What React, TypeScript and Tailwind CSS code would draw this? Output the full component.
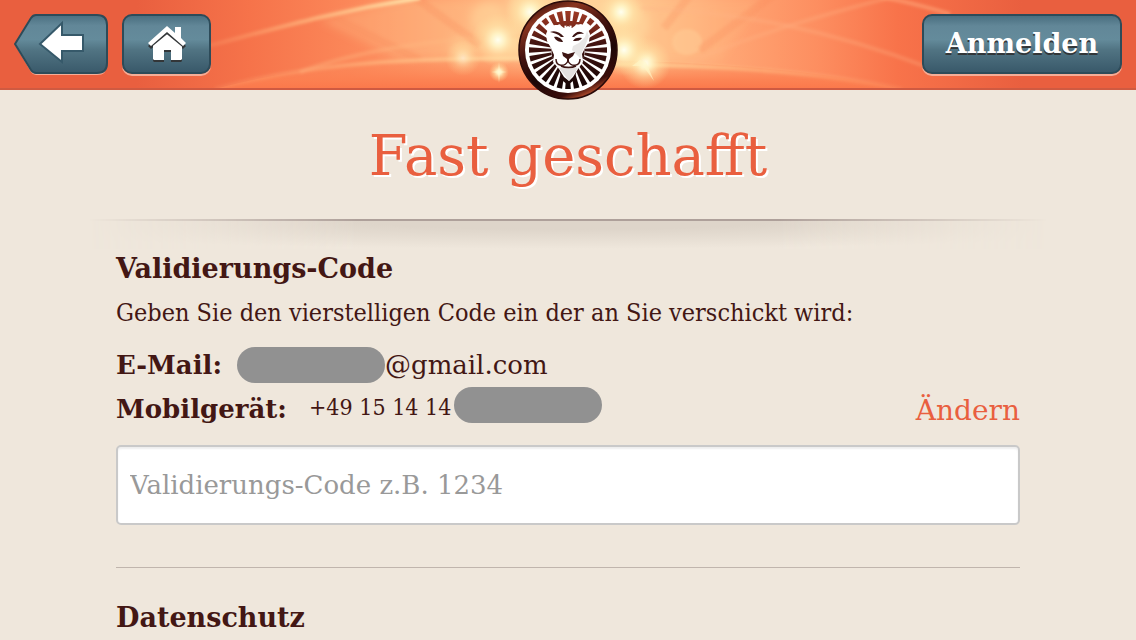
import React, { useState } from 'react';

// 28 mane rays around the lion's head
const RAYS = Array.from({ length: 28 }, (_, i) => (i * 360) / 28);

const Flare: React.FC<{ x: number; y: number; r: number }> = ({ x, y, r }) => (
  <circle cx={x} cy={y} r={r} fill="url(#flare)" />
);

const HeaderGlow: React.FC = () => (
  <svg
    className="absolute inset-0 w-full h-full"
    viewBox="0 0 1136 88"
    preserveAspectRatio="xMidYMid slice"
    aria-hidden="true"
  >
    <defs>
      <linearGradient id="base" x1="0" x2="1" y1="0" y2="0">
        <stop offset="0.12" stopColor="#e95f3f" />
        <stop offset="0.22" stopColor="#f6734a" />
        <stop offset="0.32" stopColor="#fc8a5b" />
        <stop offset="0.42" stopColor="#ffab76" />
        <stop offset="0.48" stopColor="#ffc892" />
        <stop offset="0.56" stopColor="#ffc38c" />
        <stop offset="0.64" stopColor="#ffa674" />
        <stop offset="0.72" stopColor="#fd8e60" />
        <stop offset="0.79" stopColor="#f8734a" />
        <stop offset="0.9" stopColor="#e95f3f" />
      </linearGradient>
      <linearGradient id="streak" x1="0" x2="1" y1="0" y2="0">
        <stop offset="0" stopColor="#ff9c6a" stopOpacity="0.2" />
        <stop offset="0.5" stopColor="#ffb67e" stopOpacity="0.8" />
        <stop offset="1" stopColor="#ffe6ab" />
      </linearGradient>
      <linearGradient id="streakBack" x1="1" x2="0" y1="0" y2="0">
        <stop offset="0" stopColor="#ff9c6a" stopOpacity="0.2" />
        <stop offset="0.5" stopColor="#ffb67e" stopOpacity="0.8" />
        <stop offset="1" stopColor="#ffe6ab" />
      </linearGradient>
      <linearGradient id="ground" x1="0" x2="0" y1="0" y2="1">
        <stop offset="0" stopColor="#fc8a5a" stopOpacity="0.2" />
        <stop offset="0.7" stopColor="#fc8051" stopOpacity="0.9" />
        <stop offset="1" stopColor="#fb784b" />
      </linearGradient>
      <radialGradient id="flare">
        <stop offset="0" stopColor="#fffff0" />
        <stop offset="0.25" stopColor="#fff6c8" stopOpacity="0.9" />
        <stop offset="0.55" stopColor="#ffe8ac" stopOpacity="0.5" />
        <stop offset="1" stopColor="#ffdc9b" stopOpacity="0" />
      </radialGradient>
      <filter id="soft" x="-10%" y="-50%" width="120%" height="200%">
        <feGaussianBlur stdDeviation="1.5" />
      </filter>
      <filter id="softer" x="-20%" y="-50%" width="140%" height="200%">
        <feGaussianBlur stdDeviation="5" />
      </filter>
    </defs>
    <rect width="1136" height="88" fill="url(#base)" />
    <g filter="url(#softer)" fill="#ffdba0">
      <path d="M320 20L400 0H520V55L400 58Z" opacity="0.25" />
      <path d="M640 0H760L720 60H640Z" opacity="0.12" />
      <circle cx="488" cy="20" r="18" opacity="0.5" />
      <circle cx="462" cy="48" r="12" opacity="0.4" />
      <circle cx="627" cy="24" r="22" opacity="0.6" />
      <rect x="510" y="-5" width="120" height="64" opacity="0.6" />
    </g>
    <ellipse cx="687" cy="42" rx="15" ry="13" fill="#ffd09a" opacity="0.45" filter="url(#soft)" />
    <g filter="url(#soft)" stroke="#f88455" strokeWidth="8" opacity="0.22" fill="none">
      <path d="M412 -5L480 45M330 15L420 60M690 -5L664 28M780 -10L700 50" />
    </g>
    <path d="M215 89C320 60 450 57 568 59C700 62 810 68 902 89Z" fill="url(#ground)" />
    <g filter="url(#soft)" fill="none" strokeWidth="4">
      <path d="M200 48C270 30 330 12 420 -2" stroke="url(#streak)" />
      <path d="M215 89C320 60 430 57 568 59" stroke="url(#streak)" />
      <path d="M568 64C700 64 810 70 902 89" stroke="url(#streakBack)" />
      <path d="M640 8C740 12 830 30 930 68" stroke="#ffb483" opacity="0.3" />
      <path d="M880 -3C905 1 930 8 950 14" stroke="#ffa477" opacity="0.6" />
      <path d="M900 -5C800 20 740 40 690 62" stroke="#ffb483" opacity="0.3" />
      <path d="M300 72C360 50 440 38 520 36" stroke="#ffb985" opacity="0.35" />
    </g>
    <Flare x={498} y={40} r={27} />
    <g opacity="0.55">
      <Flare x={463} y={58} r={18} />
    </g>
    <Flare x={499} y={72} r={10} />
    <Flare x={530} y={12} r={25} />
    <Flare x={621} y={12} r={24} />
    <Flare x={645} y={63} r={26} />
    <Flare x={624} y={50} r={26} />
    <path
      d="M499 62L500 71L507 72L500 73L499 83L498 73L491 72L498 71ZM640 60L646 62L654 81L643 66L632 66Z"
      fill="#fff6c8"
      opacity="0.6"
    />
  </svg>
);

const LionLogo: React.FC = () => (
  <svg className="block w-[100px] h-[100px]" viewBox="0 0 100 100" role="img" aria-label="Logo">
    <defs>
      <linearGradient id="ring" x1="0.25" x2="0.7" y1="0" y2="1">
        <stop offset="0" stopColor="#3a0f0c" />
        <stop offset="0.15" stopColor="#8a3520" />
        <stop offset="0.4" stopColor="#451310" />
        <stop offset="0.65" stopColor="#1c0606" />
        <stop offset="0.88" stopColor="#3a0d0b" />
        <stop offset="0.97" stopColor="#b8502e" />
      </linearGradient>
      <linearGradient id="mane" gradientUnits="userSpaceOnUse" x1="0" x2="0" y1="10" y2="90">
        <stop offset="0" stopColor="#a03a25" />
        <stop offset="0.22" stopColor="#7c2a1b" />
        <stop offset="0.4" stopColor="#451512" />
        <stop offset="1" stopColor="#120404" />
      </linearGradient>
    </defs>
    <circle cx="50" cy="50" r="49" fill="url(#ring)" stroke="#2a0a09" strokeWidth="1.5" />
    <circle cx="50" cy="50" r="43" fill="#fff" />
    <g fill="url(#mane)">
      {RAYS.map((deg) => {
        const a = (deg - 90) * (Math.PI / 180);
        const short = (deg > 30 && deg < 50) || (deg > 310 && deg < 330);
        const inner = short ? 33 : 17;
        const innerHalf = short ? 2.4 : 1.3;
        const point = (r: number, w: number) =>
          `${50 + r * Math.cos(a) - w * Math.sin(a)} ${50 + r * Math.sin(a) + w * Math.cos(a)}`;
        return (
          <path
            key={deg}
            d={`M${point(inner, innerHalf)}L${point(39, 2.8)}L${point(39, -2.8)}L${point(inner, -innerHalf)}Z`}
          />
        );
      })}
      <path d="M34 22L41 22L46 21H54L59 22L66 22L61 25L57 24L53 26L50 24L47 26L43 24L39 25Z" />
      <path d="M33 47L37 49L38 61L34 57ZM67 47L63 49L62 61L66 57ZM39 65L61 65L55 81L50 85L45 81Z" />
    </g>
    {/* Head */}
    <path
      d="M31 27L37 25L42 25L46 28L50 26L54 28L58 25L63 24L69 27L72 34L71 42L67 48L64 54L65 62L60 69L55 77L51 81L46 77L41 69L35 62L36 55L33 48L29 41L28 34Z"
      fill="#fff"
    />
    <path d="M69 31L71 36L67 46L64 52L63 59L58 54L54 50L55 46L61 43L67 37Z" fill="#e8e6e5" />
    <path d="M41 68L50 66L60 68L51 81Z" fill="#e3e0df" />
    <g fill="#3d1513">
      <path d="M32 32C37 30 42 32 46 37L43 37C40 34 36 33 32 32Z" />
      <path d="M54 37C57 32 62 30 66 34C62 33 59 34 56 37Z" />
      <path d="M36 37C40 36 44 39 45 42C41 42 38 41 36 37Z" />
      <path d="M55 41C56 38 60 37 64 38C62 41 59 41 55 41Z" />
      <path d="M44 52L50 54L57 52L55 56L51 59V62H49V59L45 56Z" />
    </g>
    <path
      d="M38 59C38 67 47 67 50 61C53 67 62 67 62 59M43 66C47 68 54 68 58 66"
      fill="none"
      stroke="#3d1513"
      strokeWidth="1.5"
    />
  </svg>
);

const BackShape: React.FC = () => (
  <svg className="block w-[94px] h-[62px]" viewBox="0 0 94 62" aria-hidden="true">
    <defs>
      <linearGradient id="steel" x1="0" x2="0" y1="0" y2="1">
        <stop offset="0" stopColor="#4a6f80" />
        <stop offset="0.18" stopColor="#628798" />
        <stop offset="0.42" stopColor="#648b9b" />
        <stop offset="0.6" stopColor="#517483" />
        <stop offset="1" stopColor="#39596a" />
      </linearGradient>
    </defs>
    <path d="M22 3H83Q93 3 93 13V51Q93 61 83 61H22Q19 61 17 58L1 31L17 6Q19 3 22 3Z" fill="#f5ad97" />
    <path
      d="M22 1H83Q93 1 93 11V49Q93 59 83 59H22Q19 59 17 56L1 30L17 4Q19 1 22 1Z"
      fill="url(#steel)"
      stroke="#2d4b59"
      strokeWidth="2"
    />
    <path d="M26 30L48 9V21H69V37H48V48Z" fill="#fff" stroke="#36596a" strokeWidth="2" />
  </svg>
);

const HomeIcon: React.FC = () => (
  <svg className="block w-10 h-9" viewBox="0 0 40 36" aria-hidden="true">
    <path
      d="M1 18L20 1L28 8V1H34V13L39 18L36 21L20 7L4 21ZM6 19L20 7L35 19V33L34 34H24V24H17V34H7L6 33Z"
      fill="#333638"
      transform="translate(0 2)"
    />
    <path d="M6 19L20 7L35 19V33L34 34H24V24H17V34H7L6 33Z" fill="#fff" />
    <path d="M3 21L20 7L37 21" fill="none" stroke="#333638" strokeWidth="2" />
    <path d="M1 17L20 0L28 7V1H34V12L39 17L36 20L20 6L4 20Z" fill="#fff" />
  </svg>
);

const Redacted: React.FC = () => <span className="w-37 h-9 shrink-0 rounded-full bg-[#919191]" />;

const STEEL_BUTTON =
  'flex items-center justify-center h-15 rounded-[10px] border-2 border-[#2d4b59] bg-[linear-gradient(#4a6f80,#628798_18%,#648b9b_42%,#517483_60%,#39596a)] shadow-[0_2px_0_#f5ad97]';

export default function App() {
  const [code, setCode] = useState('');

  return (
    <div className="min-h-screen bg-[#efe7dc] text-[#431714] font-['DejaVu_Serif',serif]">
      {/* Header */}
      <header className="relative h-[90px] border-b-2 border-[#cf5a41] bg-[#e95f3f]">
        <HeaderGlow />
        <div className="relative grid grid-cols-[1fr_auto_1fr] items-start px-3.5">
          <nav className="flex gap-3.5 pt-3.5">
            <button type="button" aria-label="Zurück">
              <BackShape />
            </button>
            <button type="button" aria-label="Startseite" className={`${STEEL_BUTTON} w-[89px]`}>
              <HomeIcon />
            </button>
          </nav>
          <a href="#" aria-label="Startseite">
            <LionLogo />
          </a>
          <div className="flex justify-end pt-3.5">
            <button
              type="button"
              className={`${STEEL_BUTTON} w-[200px] text-[27px] font-bold text-white [text-shadow:0_2px_0_#333638]`}
            >
              Anmelden
            </button>
          </div>
        </div>
      </header>

      {/* Title */}
      <h1 className="pt-8 text-center text-[56px] leading-[68px] text-[#e95f3f] [text-shadow:2px_2px_0_#fff]">
        Fast geschafft
      </h1>
      <div className="mx-22 mt-[29px] h-8 mask-[linear-gradient(90deg,transparent,#000_28%,#000_72%,transparent)]">
        <div className="h-0.5 bg-[#aea09a]" />
        <div className="h-7 bg-[radial-gradient(ellipse_70%_100%_at_50%_0%,#ded5ca_30%,#efe7dc)]" />
      </div>

      {/* Code form */}
      <main className="px-29">
        <h2 className="text-[27px] leading-9 font-bold">Validierungs-Code</h2>
        <p className="mt-2 text-[25px] leading-9 font-['DejaVu_Serif_Condensed','DejaVu_Serif',serif]">
          Geben Sie den vierstelligen Code ein der an Sie verschickt wird:
        </p>
        <div className="mt-4 flex items-end justify-between">
          <dl className="flex flex-col gap-1 text-[26px]">
            <div className="flex">
              <dt className="w-[121px] leading-9 font-bold">E-Mail:</dt>
              <dd className="flex leading-9">
                <Redacted />
                @gmail.com
              </dd>
            </div>
            <div className="flex">
              <dt className="w-[193px] leading-11 font-bold">Mobilgerät:</dt>
              <dd className="flex leading-10">
                <span className="w-[145px] whitespace-nowrap text-[23px] font-['DejaVu_Serif_Condensed','DejaVu_Serif',serif]">
                  +49 15 14 14
                </span>
                <Redacted />
              </dd>
            </div>
          </dl>
          <a href="#" className="text-[28px] leading-10 text-[#e95f3f]">
            Ändern
          </a>
        </div>
        <input
          type="text"
          inputMode="numeric"
          aria-label="Validierungs-Code"
          placeholder="Validierungs-Code z.B. 1234"
          value={code}
          onChange={(e) => setCode(e.target.value)}
          className="mt-3.5 block h-20 w-full rounded-[5px] border-2 border-[#c9c9c9] bg-white px-3 text-[26px] shadow-[inset_0_2px_2px_#eeeeee] placeholder:text-[#999999]"
        />
        <hr className="mt-[42px] border-[#c0b5ad]" />
        <h2 className="mt-8 text-[27px] leading-9 font-bold">Datenschutz</h2>
      </main>
    </div>
  );
}
